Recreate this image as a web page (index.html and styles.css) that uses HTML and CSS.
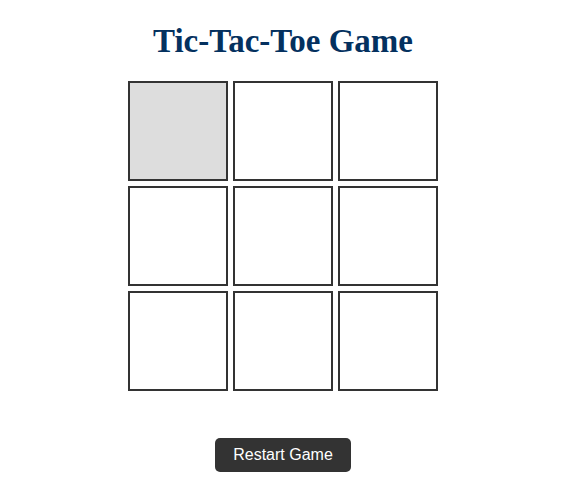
FILE: index.html
```html
<!DOCTYPE html>
<html lang="en">
<head>
<meta charset="utf-8">
<title>Tic-Tac-Toe Game</title>
<link rel="stylesheet" href="styles.css">
</head>
<body>
<main class="page">
  <h1 class="title">Tic-Tac-Toe Game</h1>
  <div class="board">
    <div class="cell cell-hover"></div>
    <div class="cell"></div>
    <div class="cell"></div>
    <div class="cell"></div>
    <div class="cell"></div>
    <div class="cell"></div>
    <div class="cell"></div>
    <div class="cell"></div>
    <div class="cell"></div>
  </div>
  <button class="restart" type="button">Restart Game</button>
</main>
</body>
</html>
```
FILE: styles.css
```css
html, body {
  margin: 0;
  padding: 0;
  background: #ffffff;
}

.page {
  display: flex;
  flex-direction: column;
  align-items: center;
  padding: 23px 0 0 5px;
  font-family: "Liberation Sans", Arial, sans-serif;
}

.title {
  margin: 0;
  font-family: "Liberation Serif", "Times New Roman", serif;
  font-weight: bold;
  font-size: 33px;
  line-height: 37px;
  color: #04315f;
}

.board {
  margin-top: 21px;
  display: grid;
  grid-template-columns: repeat(3, 100px);
  grid-template-rows: repeat(3, 100px);
  gap: 5px;
}

.cell {
  box-sizing: border-box;
  border: 2px solid #333333;
  background: #ffffff;
}

.cell-hover {
  background: #dddddd;
}

.restart {
  margin-top: 47px;
  padding: 8px 18px;
  border: none;
  border-radius: 5px;
  background: #333333;
  color: #ffffff;
  font-family: "Liberation Sans", Arial, sans-serif;
  font-size: 16px;
  line-height: 18px;
  cursor: pointer;
}
```
